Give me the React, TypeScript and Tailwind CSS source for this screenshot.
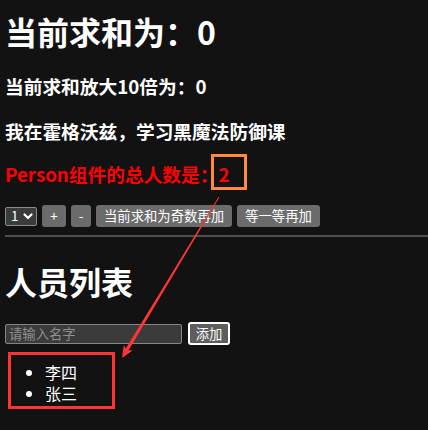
import React, { useState } from "react";

interface Person {
  id: string;
  name: string;
}

const fontStack = {
  fontFamily: '"Noto Sans CJK SC", "Noto Sans", sans-serif',
};

const Chevron = () => (
  <svg width="10" height="8" viewBox="0 0 10 8" className="ml-[5px]">
    <path d="M1.5 2.5 L5 6 L8.5 2.5" stroke="white" strokeWidth="2.2" fill="none" strokeLinecap="round" strokeLinejoin="round" />
  </svg>
);

const Count = () => {
  const btn =
    "h-[22px] rounded-[3px] bg-[#6b6b6b] text-white text-[13.33px] leading-[22px] flex items-center justify-center";
  return (
    <div>
      <h1 className="mt-[13px] text-[32px] leading-[37px] font-bold">当前求和为：0</h1>
      <h3 className="mt-[24px] text-[18.72px] leading-[24px] font-bold">当前求和放大10倍为：0</h3>
      <h3 className="mt-[21px] text-[18.72px] leading-[24px] font-bold">我在霍格沃兹，学习黑魔法防御课</h3>
      <h3 className="mt-[19px] text-[18.72px] leading-[24px] font-bold text-[#ff0000]">
        Person组件的总人数是：2
      </h3>
      <div className="mt-[19px] flex items-center gap-[5px]">
        <div className="w-[32px] h-[19px] border border-[#8a8a8a] bg-[#3b3b3b] rounded-[2px] flex items-center pl-[5px] text-[13.33px] text-white">
          1
          <Chevron />
        </div>
        <button className={`${btn} w-[24px]`}>+</button>
        <button className={`${btn} w-[20px]`}>-</button>
        <button className={`${btn} w-[136px]`}>当前求和为奇数再加</button>
        <button className={`${btn} w-[83px]`}>等一等再加</button>
      </div>
    </div>
  );
};

const PersonList = () => {
  const [persons] = useState<Person[]>([
    { id: "002", name: "李四" },
    { id: "001", name: "张三" },
  ]);
  return (
    <div>
      <h1 className="mt-[26px] text-[32px] leading-[37px] font-bold">人员列表</h1>
      <div className="mt-[22px] flex items-center">
        <input
          type="text"
          placeholder="请输入名字"
          className="w-[177px] h-[20px] border border-[#858585] bg-[#3b3b3b] rounded-[2px] px-[3px] text-[13.33px] text-white placeholder:text-[#8f8f8f] outline-none"
        />
        <button className="ml-[6px] w-[42px] h-[23px] border-2 border-white bg-[#5e5e5e] rounded-[3px] text-[13.33px] text-white leading-[18px]">
          添加
        </button>
      </div>
      <ul className="mt-[17px] list-disc pl-[40px] text-[16px] leading-[21px]">
        {persons.map((p) => (
          <li key={p.id}>{p.name}</li>
        ))}
      </ul>
    </div>
  );
};

export default function App() {
  return (
    <div className="relative h-[430px] overflow-hidden bg-[#121212] text-white pl-[5px]" style={fontStack}>
      <Count />
      <div className="mt-[8px] h-[2px] bg-[#4f4f4f]" />
      <PersonList />

      {/* annotations */}
      <div className="absolute left-[211px] top-[154px] w-[36px] h-[36px] border-[3px] border-[#ff8a3d]" />
      <div className="absolute left-[8px] top-[352px] w-[107px] h-[57px] border-[3px] border-[#ff3535]" />
      <svg className="absolute left-0 top-0 pointer-events-none" width="428" height="430">
        <polygon
          points="219.4,197.2 128.6,350.2 132.6,350.4 122,358 123.8,345 125.8,348.6 218.6,196.8"
          fill="#ff3535"
        />
      </svg>
    </div>
  );
}
